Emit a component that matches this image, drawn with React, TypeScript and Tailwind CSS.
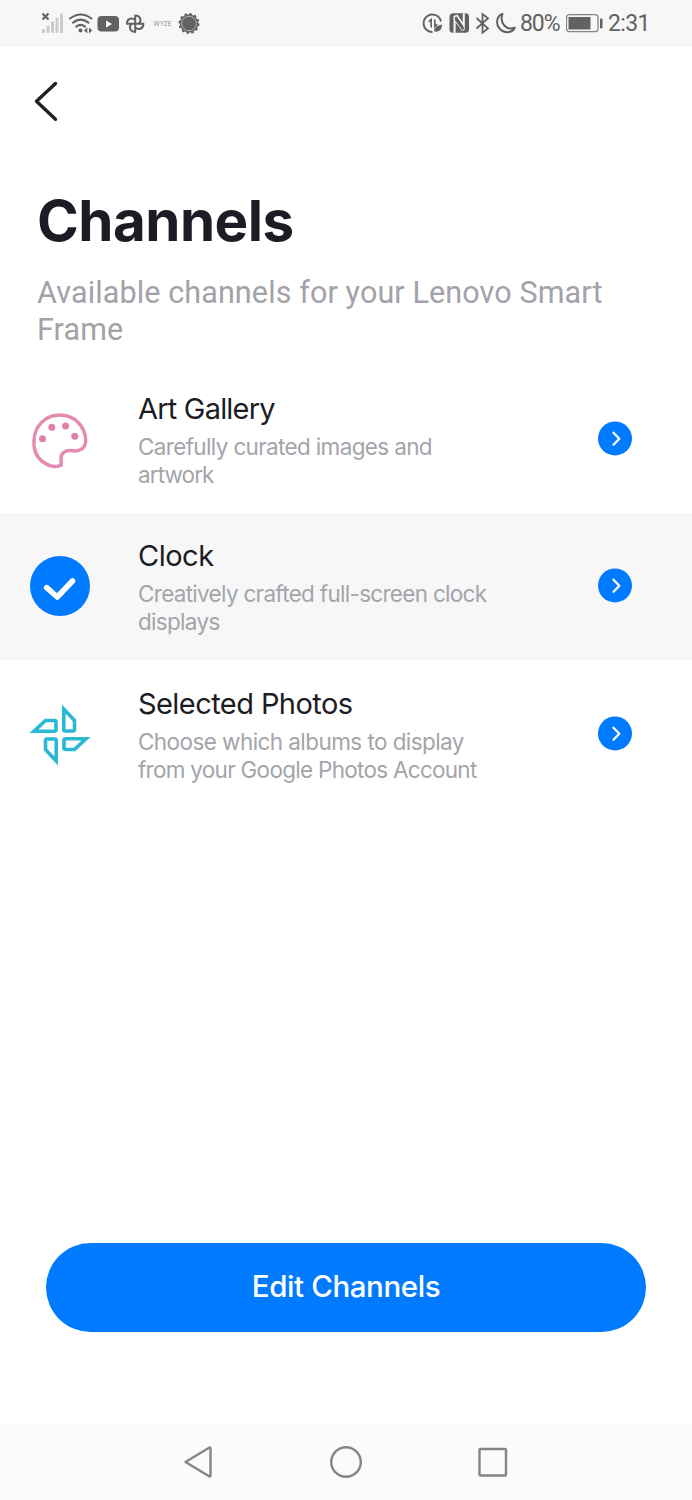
import React from "react";

function StatusBar() {
  return (
    <header className="flex h-[47px] shrink-0 items-center bg-[#f7f7f7] text-[#626262]">
      <svg width="210" height="47" viewBox="0 0 210 47" fill="currentColor" className="shrink-0">
        <path d="M42.500 13.500l6 6M48.500 13.500l-6 6" stroke="currentColor" strokeWidth="2.200" />
        <g fill="#cbcbcb">
          <rect x="42" y="29" width="3" height="4" rx="1" />
          <rect x="46.500" y="25.500" width="3" height="7.500" rx="1" />
          <rect x="51" y="21.500" width="3" height="11.500" rx="1" />
          <rect x="55.500" y="17.500" width="3" height="15.500" rx="1" />
          <rect x="60" y="13.500" width="3" height="19.500" rx="1" />
        </g>
        <g fill="none" stroke="currentColor" strokeWidth="2.100" strokeLinecap="round">
          <path d="M70 18.500Q80.700 10.500 91.400 18.500" />
          <path d="M73 22.700Q80.700 16.700 88.500 22.700" />
          <path d="M76.300 26.600Q80.700 23.200 85 26.600" />
        </g>
        <circle cx="80.500" cy="30.500" r="2" />
        <path d="M84 30.500l3.300-3v6zM92.300 30.500l-3.300-3v6z" />
        <rect x="97.500" y="16" width="21.500" height="15.500" rx="4" />
        <path d="M106 20.500v7l6-3.500z" fill="#fff" />
        <g fill="none" stroke="currentColor" strokeWidth="2" strokeLinejoin="round">
          <path d="M135.200 23.700V15.500C141 15.500 141.500 21 139 23.700" />
          <path d="M135.200 23.700V15.500C141 15.500 141.500 21 139 23.700" transform="rotate(90 135.200 23.700)" />
          <path d="M135.200 23.700V15.500C141 15.500 141.500 21 139 23.700" transform="rotate(180 135.200 23.700)" />
          <path d="M135.200 23.700V15.500C141 15.500 141.500 21 139 23.700" transform="rotate(270 135.200 23.700)" />
        </g>
        <text x="153.500" y="25.700" fontSize="5.500" textLength="18" lengthAdjust="spacingAndGlyphs" fontFamily="Inter, sans-serif" fill="#8a8a8a">WYZE</text>
        <circle cx="189" cy="23.500" r="9.300" />
        <circle cx="189" cy="23.500" r="9.500" fill="none" stroke="currentColor" strokeWidth="2" strokeDasharray="2.490 2.490" />
        <circle cx="189" cy="23.500" r="7.300" fill="none" stroke="#c5c5c5" strokeWidth="0.800" />
      </svg>
      <svg width="106" height="47" viewBox="416 0 106 47" fill="none" stroke="currentColor" className="ml-[206px] shrink-0">
        <path d="M441 21.500A8.800 8.800 0 1 0 432.500 32" strokeWidth="2" />
        <path d="M428.800 21.800l2.400-2.300V27.500M434.800 19.500V26.500l2.400-2.300" strokeWidth="1.600" />
        <path d="M434.200 31.500c-.3-4 2.800-6 7.800-7c0 4.800-2.500 7.800-7.800 7z" fill="currentColor" stroke="none" />
        <rect x="449.500" y="13.300" width="19.500" height="19.500" rx="3.500" fill="currentColor" stroke="none" />
        <path d="M454.300 32.800V16.500L457 15.500L463.500 25V13.300" stroke="#f7f7f7" strokeWidth="1.500" />
        <path d="M464.300 13.300V29.500L462 30.500L455.200 21V32.800" stroke="#f7f7f7" strokeWidth="0.900" />
        <path d="M476.500 18l11.500 10.500-5.500 4.200V14l5.500 4.200L476.500 28.500" strokeWidth="1.800" />
        <path d="M502.500 14c-6 2-7 10-3 14.500s12 5.500 15.300-.8c-3.500 1.300-7.500 1-10.300-2S501 18 502.500 14z" strokeWidth="2" strokeLinejoin="round" />
      </svg>
      <span className="-ml-[2px] w-[46px] pt-px font-[Roboto,sans-serif] text-[23px] leading-[46px] tracking-[-1.1px]">80%</span>
      <svg width="38" height="47" viewBox="566 0 38 47" className="shrink-0" fill="currentColor">
        <rect x="566.500" y="14.700" width="31.500" height="17" rx="3" fill="none" stroke="#858585" strokeWidth="1.300" />
        <rect x="568.500" y="17" width="22" height="12.500" />
        <rect x="600" y="18.500" width="2.500" height="10" rx="1" />
      </svg>
      <span className="ml-[4px] pt-px font-[Roboto,sans-serif] text-[23px] leading-[46px] tracking-[-0.6px]">2:31</span>
    </header>
  );
}

function PaletteIcon() {
  return (
    <svg width="60" height="60" viewBox="30 410 60 60" fill="none" stroke="#e589b0" strokeWidth="3.400" strokeLinejoin="round">
      <path d="M61.300 465C57 467.500 50.500 467 45.500 463.500C37 458.500 33.300 450 34 440C35 425 46 415 60 415C74 415 85.300 426 85.700 440.500C85.700 448 80 452 73 450.800C65 449.500 60.500 453.500 61 459Z" />
      <g fill="#e27fa9" stroke="none">
        <circle cx="42.500" cy="438.700" r="3.500" />
        <circle cx="51.800" cy="427.300" r="3.500" />
        <circle cx="65.600" cy="426" r="3.500" />
        <circle cx="74.800" cy="436.300" r="3.500" />
      </g>
    </svg>
  );
}

function CheckIcon() {
  return (
    <svg width="60" height="60" viewBox="30 556 60 60" className="-mt-px">
      <circle cx="60" cy="586" r="30" fill="#007aff" />
      <path d="M46.700 587.700l10.500 9.300L72.500 581" fill="none" stroke="#fff" strokeWidth="5.600" strokeLinecap="round" strokeLinejoin="round" />
    </svg>
  );
}

function PinwheelIcon() {
  const blade = "M63.800 709V729.500Q63.800 731 65.300 731H73Q74.500 731 74.500 729.500V720.500Z";
  return (
    <svg width="62" height="62" viewBox="29 704 62 62" fill="none" stroke="#29b9d5" strokeWidth="3.600" className="-mt-px">
      <path d={blade} />
      <path d={blade} transform="rotate(90 60 735)" />
      <path d={blade} transform="rotate(180 60 735)" />
      <path d={blade} transform="rotate(270 60 735)" />
    </svg>
  );
}

type ChannelProps = {
  icon: React.ReactNode;
  title: string;
  titleClass: string;
  lines: { text: string; className: string }[];
  rowClass: string;
};

function Channel({ icon, title, titleClass, lines, rowClass }: ChannelProps) {
  return (
    <li className={"flex h-[147px] " + rowClass}>
      <div className="flex w-[120px] shrink-0 justify-center pt-[44px]">{icon}</div>
      <div className="w-[478px] shrink-0 pt-[25px] pl-[18px]">
        <h2 className={"h-[36px] text-[29px] leading-[36px] whitespace-nowrap text-[#1c1c24] " + titleClass}>{title}</h2>
        <p className="mt-[6px] text-[22.500px] leading-[28px] whitespace-nowrap text-[#a4a4aa]">
          {lines.map((l) => (
            <span key={l.text} className={"block " + l.className}>{l.text}</span>
          ))}
        </p>
      </div>
      <button aria-label={title} className="mt-[55px] size-[34px] shrink-0">
        <svg width="34" height="34" viewBox="0 0 34 34" className="overflow-visible">
          <circle cx="17" cy="17.400" r="17" fill="#007aff" />
          <path d="M15.500 11.700l5.800 6-5.800 6" fill="none" stroke="#fff" strokeWidth="2.300" strokeLinecap="round" strokeLinejoin="round" />
        </svg>
      </button>
    </li>
  );
}

export default function App() {
  return (
    <div className="flex h-[1500px] w-[692px] flex-col overflow-hidden bg-white font-[Inter,sans-serif]">
      <StatusBar />
      <main className="flex grow flex-col">
        <button aria-label="Back" className="mt-[33px] ml-[33px] h-[43px] w-[27px]">
          <svg width="27" height="43" viewBox="33 80 27 43" fill="none" stroke="#1f2028" strokeWidth="3.400" strokeLinecap="round" strokeLinejoin="round">
            <path d="M55.500 83.500L36.500 101.300L55.500 119.300" />
          </svg>
        </button>
        <h1 className="mt-[63px] ml-[37px] h-[70px] text-[56.500px] leading-[70px] font-bold tracking-[-0.500px] text-[#1c1c24]">Channels</h1>
        <p className="mt-[18px] ml-[37px] h-[73px] font-[Roboto,sans-serif] text-[30.500px] leading-[37px] tracking-[0.120px] whitespace-nowrap text-[#a2a2a8]">
          Available channels for your Lenovo Smart
          <br />
          Frame
        </p>
        <ul className="mt-[19px]">
          <Channel rowClass="bg-white" icon={<PaletteIcon />} title="Art Gallery" titleClass="tracking-[-0.8px]" lines={[
            { text: "Carefully curated images and", className: "tracking-[-0.65px]" },
            { text: "artwork", className: "tracking-[-0.9px]" },
          ]} />
          <Channel rowClass="bg-[#f7f7f7]" icon={<CheckIcon />} title="Clock" titleClass="tracking-[-0.5px]" lines={[
            { text: "Creatively crafted full-screen clock", className: "tracking-[-0.7px]" },
            { text: "displays", className: "tracking-[-0.7px]" },
          ]} />
          <Channel rowClass="bg-white pt-px" icon={<PinwheelIcon />} title="Selected Photos" titleClass="tracking-[-0.57px]" lines={[
            { text: "Choose which albums to display", className: "tracking-[-0.57px]" },
            { text: "from your Google Photos Account", className: "tracking-[-0.72px]" },
          ]} />
        </ul>
        <button className="mx-[46px] mt-auto mb-[92px] h-[89px] rounded-full bg-[#007aff] pb-[2px] text-[29.500px] leading-[87px] font-medium tracking-[-0.4px] text-white">
          Edit Channels
        </button>
      </main>
      <nav className="h-[76px] shrink-0 bg-[#fbfbfb]">
        <svg width="692" height="76" viewBox="0 1424 692 76" fill="none" stroke="#858585" strokeWidth="2.400" strokeLinejoin="round">
          <path d="M185.500 1462L209.500 1447.500Q210.500 1447 210.500 1448.500V1475.500Q210.500 1477 209.500 1476.500Z" />
          <circle cx="346" cy="1462" r="14.800" />
          <rect x="479.500" y="1449" width="26.500" height="26.500" rx="1" />
        </svg>
      </nav>
    </div>
  );
}
